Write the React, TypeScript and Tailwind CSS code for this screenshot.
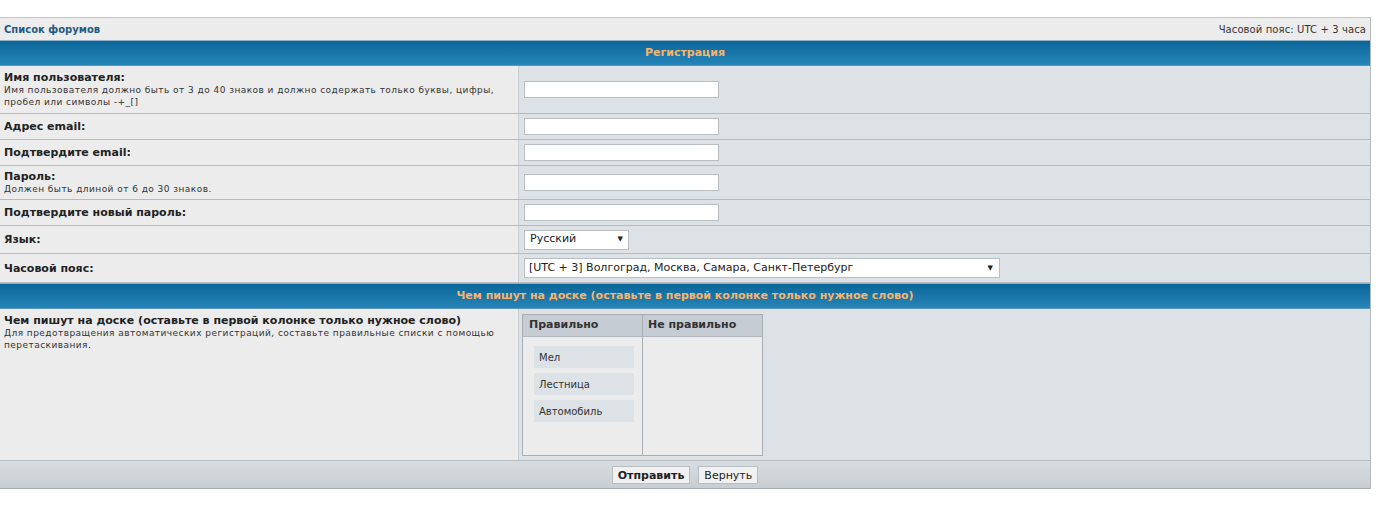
const font = { fontFamily: 'Verdana, "DejaVu Sans", sans-serif' };

type Row = { label: string; hint?: string; field: 'input' | 'lang' | 'tz'; h: string };

const rows: Row[] = [
  {
    label: 'Имя пользователя:',
    hint: 'Имя пользователя должно быть от 3 до 40 знаков и должно содержать только буквы, цифры, пробел или символы -+_[]',
    field: 'input',
    h: 'h-[48px]',
  },
  { label: 'Адрес email:', field: 'input', h: 'h-[26px]' },
  { label: 'Подтвердите email:', field: 'input', h: 'h-[26px]' },
  { label: 'Пароль:', hint: 'Должен быть длиной от 6 до 30 знаков.', field: 'input', h: 'h-[34px]' },
  { label: 'Подтвердите новый пароль:', field: 'input', h: 'h-[26px]' },
  { label: 'Язык:', field: 'lang', h: 'h-[28px]' },
  { label: 'Часовой пояс:', field: 'tz', h: 'h-[29px]' },
];

function Caret() {
  return <span className="text-[7px] text-[#222]">▼</span>;
}

function Field({ kind }: { kind: Row['field'] }) {
  if (kind === 'input')
    return <div className="w-[195px] h-[17px] bg-white border border-[#b9bec3]" />;
  if (kind === 'lang')
    return (
      <div className="w-[105px] h-[20px] bg-white border border-[#b9bec3] flex items-center justify-between px-[5px] text-[11px] text-[#222]">
        <span>Русский</span>
        <Caret />
      </div>
    );
  return (
    <div className="w-[476px] h-[20px] bg-white border border-[#b9bec3] flex items-center justify-between pl-[4px] pr-[6px] text-[11px] text-[#222]">
      <span>[UTC + 3] Волгоград, Москва, Самара, Санкт-Петербург</span>
      <Caret />
    </div>
  );
}

function Band({ title }: { title: string }) {
  return (
    <div className="h-[26px] border-t border-[#8fb0c6] bg-gradient-to-b from-[#0a6698] to-[#2585b8] border-b border-b-[#5e94b8] flex items-center justify-center">
      <span className="text-[11px] font-bold text-[#f7b46c]">{title}</span>
    </div>
  );
}

export default function App() {
  return (
    <div className="bg-white min-h-[506px] pt-[17px]" style={font}>
      <div className="w-[1371px] border-r border-[#b5b9bd]">
        <div className="h-[23px] bg-[#ececec] border-t border-[#c3c7ca] flex items-center justify-between px-[4px]">
          <span className="text-[10px] font-bold text-[#1f5a80]">Список форумов</span>
          <span className="text-[10px] text-[#333] tracking-[0.1px]">Часовой пояс: UTC + 3 часа</span>
        </div>
        <Band title="Регистрация" />
        {rows.map((r) => (
          <div key={r.label} className={`flex border-b border-[#b6bbc0] ${r.h}`}>
            <div className="w-[519px] shrink-0 bg-[#ececec] border-r border-[#c9cdd1] px-[4px] flex flex-col justify-center">
              <div className="text-[11px] font-bold text-[#222] leading-[13px]">{r.label}</div>
              {r.hint && (
                <div className="text-[9px] text-[#333] leading-[12px] tracking-[0.45px]">{r.hint}</div>
              )}
            </div>
            <div className="flex-1 bg-[#dde2e6] flex items-center pl-[5px]">
              <Field kind={r.field} />
            </div>
          </div>
        ))}
        <Band title="Чем пишут на доске (оставьте в первой колонке только нужное слово)" />
        <div className="flex h-[152px] border-b border-[#b6bbc0]">
          <div className="w-[519px] shrink-0 bg-[#ececec] border-r border-[#c9cdd1] px-[4px] pt-[5px]">
            <div className="text-[11px] font-bold text-[#222] leading-[13px]">
              Чем пишут на доске (оставьте в первой колонке только нужное слово)
            </div>
            <div className="text-[9px] text-[#333] leading-[12px] tracking-[0.45px]">
              Для предотвращения автоматических регистраций, составьте правильные списки с помощью перетаскивания.
            </div>
          </div>
          <div className="flex-1 bg-[#dde2e6] pl-[3px] pt-[5px]">
            <div className="w-[241px] h-[142px] border border-[#a9aeb3] flex bg-[#ececec]">
              <div className="w-[120px] border-r border-[#a9aeb3] flex flex-col">
                <div className="h-[22px] bg-[#c5ccd3] border-b border-[#b1b7bd] flex items-center px-[6px] text-[11px] font-bold text-[#333]">
                  Правильно
                </div>
                <div className="flex flex-col gap-[5px] pt-[9px] pl-[11px]">
                  {['Мел', 'Лестница', 'Автомобиль'].map((w) => (
                    <div key={w} className="w-[100px] h-[22px] bg-[#dde2e6] flex items-center px-[5px] text-[10px] text-[#333]">
                      {w}
                    </div>
                  ))}
                </div>
              </div>
              <div className="flex-1 flex flex-col">
                <div className="h-[22px] bg-[#c5ccd3] border-b border-[#b1b7bd] flex items-center px-[5px] text-[11px] font-bold text-[#333]">
                  Не правильно
                </div>
              </div>
            </div>
          </div>
        </div>
        <div className="h-[28px] bg-gradient-to-b from-[#d8dde1] to-[#c9ced3] border-b border-[#a8adb2] flex items-center justify-center gap-[8px] pt-[1px]">
          <button className="h-[18px] px-[5px] bg-[#f1f1f1] border border-[#b9bec3] text-[11px] font-bold text-[#222] leading-none">
            Отправить
          </button>
          <button className="h-[18px] px-[5px] bg-[#f1f1f1] border border-[#b9bec3] text-[11px] text-[#222] leading-none">
            Вернуть
          </button>
        </div>
      </div>
    </div>
  );
}
